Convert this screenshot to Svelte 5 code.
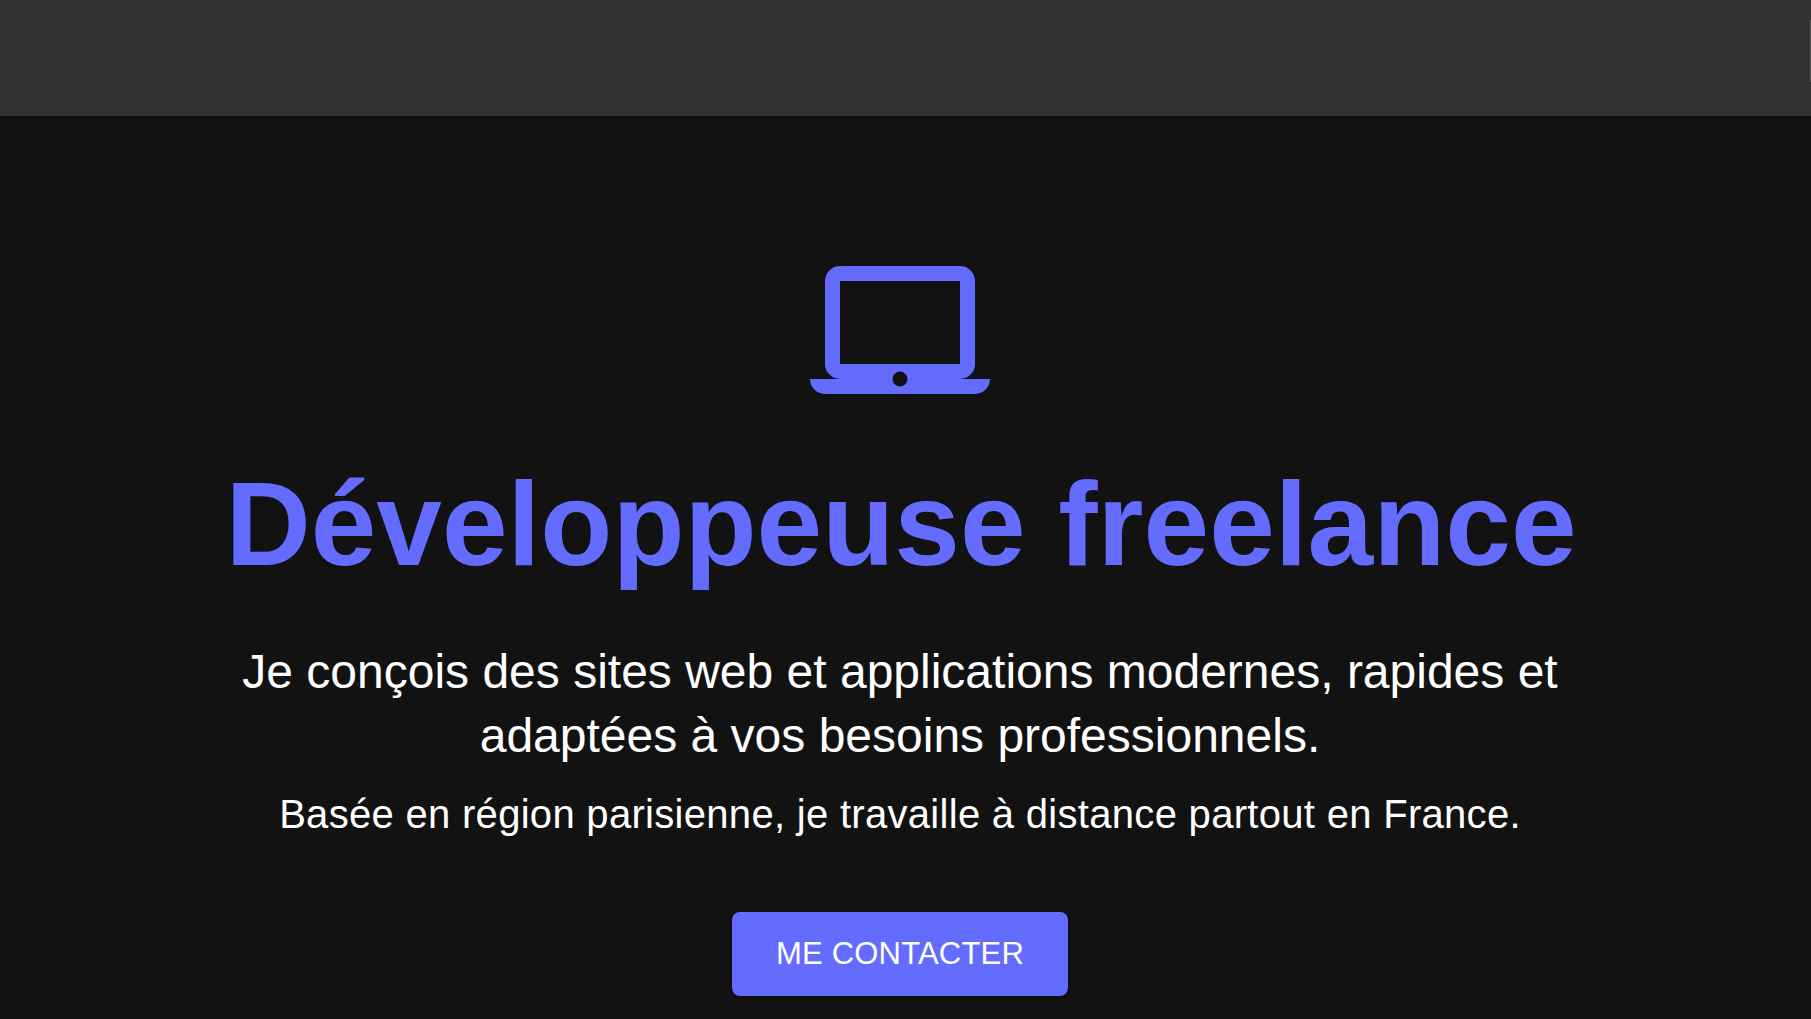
<script>
  const title = 'Développeuse freelance';
</script>

<div class="page">
  <header class="topbar"><span class="thumb"></span></header>
  <main class="hero">
    <svg class="laptop" viewBox="0 0 180 128" aria-hidden="true">
      <path fill-rule="evenodd" d="M30 0h120a15 15 0 0 1 15 15v83a15 15 0 0 1-15 15h30a15 15 0 0 1-15 15H15a15 15 0 0 1-15-15h30a15 15 0 0 1-15-15V15a15 15 0 0 1 15-15zM30 15v83h120V15zM82.500 113a7.500 7.500 0 1 0 15 0a7.500 7.500 0 1 0-15 0z" />
    </svg>
    <h1>{title}</h1>
    <p class="lead">Je conçois des sites web et applications modernes, rapides et adaptées à vos besoins professionnels.</p>
    <p class="sub">Basée en région parisienne, je travaille à distance partout en France.</p>
    <button class="cta">ME CONTACTER</button>
  </main>
</div>

<style>
  :global(body) { margin: 0; background: #121212; overflow: hidden; }
  .page { height: 1019px; overflow: hidden; font-family: "Liberation Sans", Arial, sans-serif; color: #fff; }
  .topbar { position: relative; height: 116px; background: #333; box-shadow: 0 2px 4px rgba(0,0,0,0.2); }
  .thumb { position: absolute; top: 20px; right: 0; width: 1px; height: 62px; background: #555; }
  .hero { display: flex; flex-direction: column; align-items: center; padding: 150px 11px 0 0; text-align: center; }
  .laptop { width: 180px; height: 128px; fill: #646cff; display: block; }
  h1 { margin: 66px 0 0 2px; font-size: 118px; line-height: 1.1; font-weight: 700; color: #646cff; white-space: nowrap; }
  .lead { margin: 50px 0 0; width: 1340px; font-size: 48px; line-height: 64px; }
  .sub { margin: 18px 0 0; font-size: 40px; line-height: 56px; letter-spacing: 0.3px; }
  .cta { margin-top: 70px; width: 336px; height: 84px; border: 0; border-radius: 8px; background: #646cff; color: #fff; font: 31px "Liberation Sans", Arial, sans-serif; letter-spacing: 0.2px; box-shadow: 0 2px 6px rgba(0,0,0,0.3); }
</style>
